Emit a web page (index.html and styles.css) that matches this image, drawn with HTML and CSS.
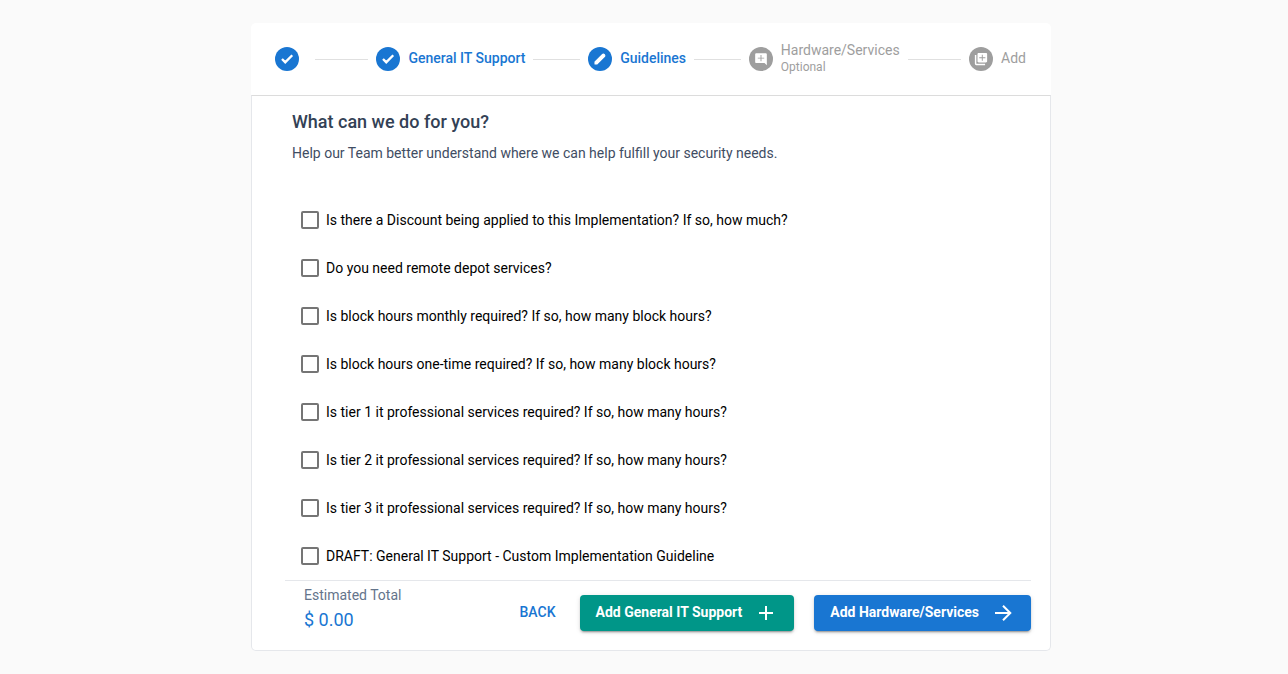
FILE: index.html
```
<!DOCTYPE html>
<html lang="en">
<head>
<meta charset="utf-8">
<meta name="viewport" content="width=device-width, initial-scale=1">
<title>Guidelines</title>
<link rel="stylesheet" href="styles.css">
</head>
<body>
<main class="wizard">
  <ol class="stepper">
    <li class="step step-done step-unlabelled">
      <span class="step-icon"><svg viewBox="0 0 24 24"><path d="M9 16.170 4.830 12l-1.420 1.410L9 19 21 7l-1.410-1.410z"/></svg></span>
    </li>
    <li class="step-line step-line-long" aria-hidden="true"></li>
    <li class="step step-done">
      <span class="step-icon"><svg viewBox="0 0 24 24"><path d="M9 16.170 4.830 12l-1.420 1.410L9 19 21 7l-1.410-1.410z"/></svg></span>
      <span class="step-label">General IT Support</span>
    </li>
    <li class="step-line" aria-hidden="true"></li>
    <li class="step step-done" aria-current="step">
      <span class="step-icon"><svg viewBox="0 0 24 24"><path d="M3.500 17 16 4.500a2.200 2.200 0 0 1 3.500 3.500L7 20.500H3.500z" stroke-width="2" stroke-linejoin="round"/></svg></span>
      <span class="step-label">Guidelines</span>
    </li>
    <li class="step-line" aria-hidden="true"></li>
    <li class="step">
      <span class="step-icon"><svg class="icon-plain" viewBox="0 0 24 24"><path fill-rule="evenodd" d="M22 4c0-1.100-.9-2-2-2H4c-1.100 0-2 .9-2 2v13c0 1.100.9 2 2 2h14l4 3.500zM17.500 11.300h-4.700V16h-1.600v-4.700H6.500V9.700h4.700V5h1.600v4.700h4.700z"/></svg></span>
      <span class="step-label">Hardware/Services<small class="step-note">Optional</small></span>
    </li>
    <li class="step-line step-line-long" aria-hidden="true"></li>
    <li class="step">
      <span class="step-icon"><svg class="icon-plain" viewBox="0 0 24 24"><path fill-rule="evenodd" d="M4 5H1.500v15c0 1.400 1.100 2.500 2.500 2.500h15V20H4zM20.500 1.500H8c-1.100 0-2 .9-2 2V16c0 1.100.9 2 2 2h12.500c1.100 0 2-.9 2-2V3.500c0-1.100-.9-2-2-2zM19.500 10.500H15V15h-1.600v-4.500H9V8.900h4.400V4.500H15v4.400h4.500z"/></svg></span>
      <span class="step-label">Add</span>
    </li>
  </ol>

  <form class="panel">
    <header class="intro">
      <h1 class="title">What can we do for you?</h1>
      <p class="subtitle">Help our Team better understand where we can help fulfill your security needs.</p>
    </header>

    <div class="questions">
      <label class="question"><input class="box" type="checkbox">Is there a Discount being applied to this Implementation? If so, how much?</label>
      <label class="question"><input class="box" type="checkbox">Do you need remote depot services?</label>
      <label class="question"><input class="box" type="checkbox">Is block hours monthly required? If so, how many block hours?</label>
      <label class="question"><input class="box" type="checkbox">Is block hours one-time required? If so, how many block hours?</label>
      <label class="question"><input class="box" type="checkbox">Is tier 1 it professional services required? If so, how many hours?</label>
      <label class="question"><input class="box" type="checkbox">Is tier 2 it professional services required? If so, how many hours?</label>
      <label class="question"><input class="box" type="checkbox">Is tier 3 it professional services required? If so, how many hours?</label>
      <label class="question"><input class="box" type="checkbox">DRAFT: General IT Support - Custom Implementation Guideline</label>
    </div>

    <footer class="footer">
      <div class="total">
        <span class="total-label">Estimated Total</span>
        <span class="total-value">$ 0.00</span>
      </div>
      <div class="actions">
        <button class="button button-text" type="button">BACK</button>
        <button class="button button-add" type="button">Add General IT Support<svg class="button-icon" viewBox="0 0 24 24"><path d="M12 5v14M5 12h14"/></svg></button>
        <button class="button button-next" type="button">Add Hardware/Services<svg class="button-icon" viewBox="0 0 24 24"><path d="M4 12h15M12 4.700l7.300 7.300-7.300 7.300"/></svg></button>
      </div>
    </footer>
  </form>
</main>
</body>
</html>
```
FILE: styles.css
```
* {
  box-sizing: border-box;
}

body {
  margin: 0;
  padding: 23px 0 23px 14px;
  background: #fafafa;
  color: #000;
  font-family: Roboto, "Liberation Sans", sans-serif;
  font-size: 14px;
  line-height: 20px;
}

.wizard {
  max-width: 800px;
  margin: 0 auto;
  background: #fff;
  border-radius: 5px;
}

.stepper {
  display: flex;
  align-items: center;
  gap: 8px;
  min-height: 72px;
  margin: 0;
  padding: 0 25px 0 24px;
  list-style: none;
}

.step {
  display: flex;
  align-items: center;
  gap: 8px;
  color: #9e9e9e;
}

.step-unlabelled {
  padding-right: 8px;
}

.step-done {
  color: #1976d2;
  font-weight: 500;
}

.step-icon {
  display: grid;
  place-items: center;
  width: 24px;
  height: 24px;
  border-radius: 50%;
  background: #9e9e9e;
}

.step-done .step-icon {
  background: #1976d2;
}

.step-icon svg {
  width: 14px;
  height: 14px;
  fill: #fff;
  stroke: #fff;
  stroke-width: 2;
}

.step-icon .icon-plain {
  stroke: none;
}

.step-label {
  padding-bottom: 2px;
  line-height: 18px;
}

.step-note {
  display: block;
  font-size: 12px;
  line-height: 16px;
}

.step-line {
  flex: 7 1 0;
  border-top: 1px solid #e0e0e0;
}

.step-line-long {
  flex-grow: 8;
}

.panel {
  border: 1px solid #e5e7eb;
  border-top-color: #dcdcdc;
  border-radius: 0 0 5px 5px;
}

.intro {
  padding: 12px 40px 33px;
  color: #334155;
}

.title {
  margin: 0 0 7px;
  font-size: 18px;
  font-weight: 500;
  line-height: 28px;
}

.subtitle {
  margin: 0;
  color: #3f4d63;
}

.questions {
  padding: 0 49px;
}

.question {
  display: flex;
  align-items: center;
  gap: 7px;
  min-height: 48px;
}

.box {
  appearance: none;
  width: 18px;
  height: 18px;
  margin: 0;
  border: 2px solid #757575;
  border-radius: 2px;
  background: #fff;
}

.box:checked {
  border-color: #1976d2;
  background: #1976d2;
}

.footer {
  display: flex;
  justify-content: space-between;
  align-items: flex-start;
  margin: 0 19px 0 33px;
  padding: 4px 0 16px 19px;
  border-top: 1px solid #e5e7eb;
}

.total {
  display: grid;
  gap: 1px;
}

.total-label {
  color: #64748b;
}

.total-value {
  color: #1976d2;
  font-size: 18px;
  line-height: 28px;
}

.actions {
  display: flex;
  gap: 20px;
  padding-top: 10px;
}

.button {
  display: flex;
  align-items: center;
  gap: 12px;
  height: 36px;
  padding: 0 16px 2px;
  border: 0;
  border-radius: 4px;
  color: #fff;
  font: 700 14px/34px Roboto, "Liberation Sans", sans-serif;
  cursor: pointer;
}

.button-text {
  padding: 0 4px 2px;
  background: none;
  color: #1976d2;
  font-weight: 500;
}

.button-add,
.button-next {
  box-shadow: 0 3px 1px -2px rgba(0, 0, 0, 0.2), 0 2px 2px rgba(0, 0, 0, 0.14), 0 1px 5px rgba(0, 0, 0, 0.12);
}

.button-add {
  background: #009688;
}

.button-next {
  background: #1976d2;
}

.button-icon {
  width: 24px;
  height: 24px;
  margin-top: 2px;
  fill: none;
  stroke: #fff;
  stroke-width: 2;
}
```
